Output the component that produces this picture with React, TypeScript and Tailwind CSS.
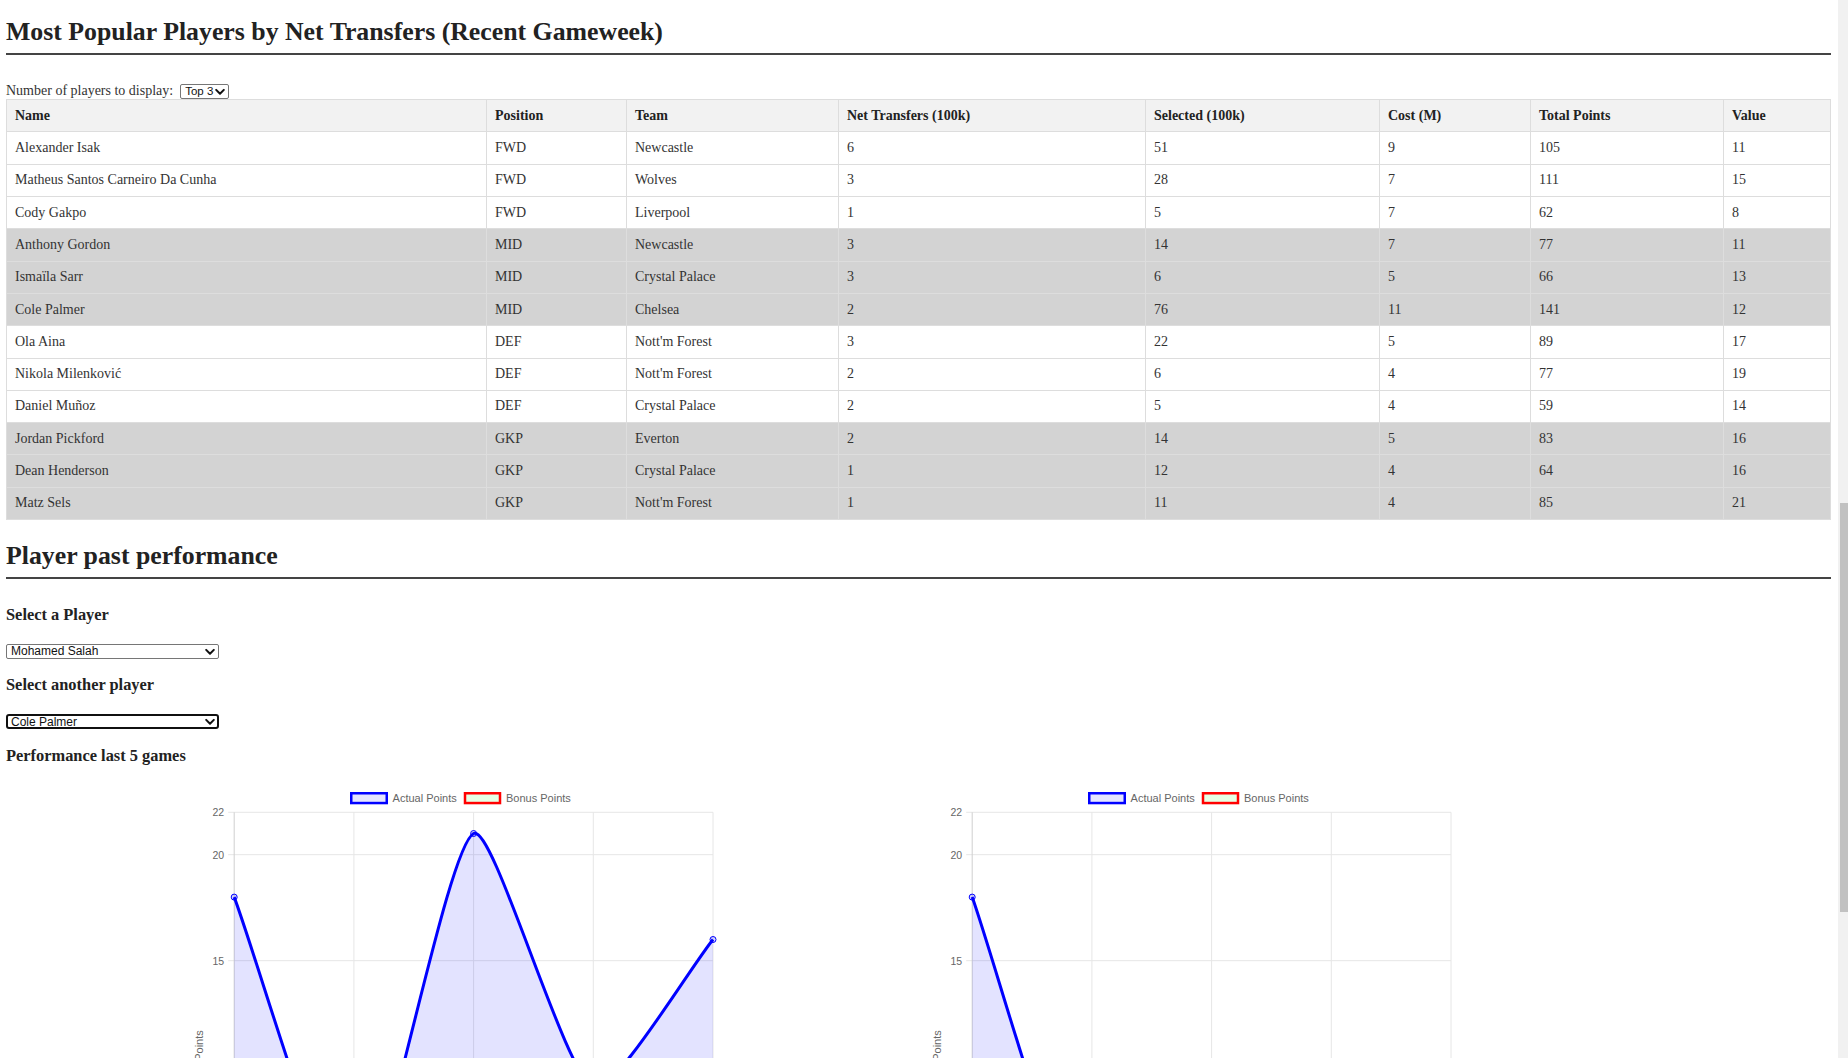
import React from "react";

type Player = [string, string, string, number, number, number, number, number];

const players: Player[] = [
  ["Alexander Isak", "FWD", "Newcastle", 6, 51, 9, 105, 11],
  ["Matheus Santos Carneiro Da Cunha", "FWD", "Wolves", 3, 28, 7, 111, 15],
  ["Cody Gakpo", "FWD", "Liverpool", 1, 5, 7, 62, 8],
  ["Anthony Gordon", "MID", "Newcastle", 3, 14, 7, 77, 11],
  ["Ismaïla Sarr", "MID", "Crystal Palace", 3, 6, 5, 66, 13],
  ["Cole Palmer", "MID", "Chelsea", 2, 76, 11, 141, 12],
  ["Ola Aina", "DEF", "Nott'm Forest", 3, 22, 5, 89, 17],
  ["Nikola Milenković", "DEF", "Nott'm Forest", 2, 6, 4, 77, 19],
  ["Daniel Muñoz", "DEF", "Crystal Palace", 2, 5, 4, 59, 14],
  ["Jordan Pickford", "GKP", "Everton", 2, 14, 5, 83, 16],
  ["Dean Henderson", "GKP", "Crystal Palace", 1, 12, 4, 64, 16],
  ["Matz Sels", "GKP", "Nott'm Forest", 1, 11, 4, 85, 21],
];

const headers = [
  { label: "Name", w: "w-[480px]" },
  { label: "Position", w: "w-[140px]" },
  { label: "Team", w: "w-[212px]" },
  { label: "Net Transfers (100k)", w: "w-[307px]" },
  { label: "Selected (100k)", w: "w-[234px]" },
  { label: "Cost (M)", w: "w-[151px]" },
  { label: "Total Points", w: "w-[193px]" },
  { label: "Value", w: "" },
];

function Chevron() {
  return (
    <svg
      width="10"
      height="7"
      viewBox="0 0 10 7"
      className="pointer-events-none absolute right-[4px] top-1/2 -translate-y-1/2"
    >
      <path d="M1.2 1.4 L5 5.2 L8.8 1.4" fill="none" stroke="#111" strokeWidth="2" strokeLinecap="round" strokeLinejoin="round" />
    </svg>
  );
}

function FakeSelect({ value, width, focused, small }: { value: string; width: string; focused?: boolean; small?: boolean }) {
  return (
    <div className={`relative flex h-[15px] ${width}`}>
      <select
        defaultValue={value}
        className={`h-[15px] w-full appearance-none bg-white font-['Liberation_Sans',Arial,sans-serif] leading-[13px] text-[#111] ${
          small ? "text-[11.5px]" : "text-[12px]"
        } ${focused ? "rounded-[3px] border-2 border-[#101010] pl-[3px]" : "rounded-[2px] border border-[#767676] pl-[4px]"}`}
      >
        <option>{value}</option>
      </select>
      <Chevron />
    </div>
  );
}

type Pt = { x: number; y: number };

function splinePath(pts: Pt[], tension: number, top: number, bottom: number) {
  const clamp = (v: number) => Math.min(bottom, Math.max(top, v));
  const cps = pts.map((p, i) => {
    const prev = pts[i - 1] ?? p;
    const next = pts[i + 1] ?? p;
    const d01 = Math.hypot(p.x - prev.x, p.y - prev.y);
    const d12 = Math.hypot(next.x - p.x, next.y - p.y);
    const sum = d01 + d12 || 1;
    const fa = tension * (d01 / sum);
    const fb = tension * (d12 / sum);
    return {
      prev: { x: p.x - fa * (next.x - prev.x), y: clamp(p.y - fa * (next.y - prev.y)) },
      next: { x: p.x + fb * (next.x - prev.x), y: clamp(p.y + fb * (next.y - prev.y)) },
    };
  });
  let d = `M${pts[0].x} ${pts[0].y}`;
  for (let i = 1; i < pts.length; i++) {
    const a = cps[i - 1].next;
    const b = cps[i].prev;
    d += ` C${a.x} ${a.y} ${b.x} ${b.y} ${pts[i].x} ${pts[i].y}`;
  }
  return d;
}

const X0 = 74.2;
const DX = 119.7;
const TOP = 42.3;
const UNIT = 21.2;
const yOf = (v: number) => TOP + (22 - v) * UNIT;
const BOTTOM = yOf(0);
const RIGHT = X0 + DX * 4;

function PerfChart({ actual, bonus }: { actual: number[]; bonus: number[] }) {
  const pts = actual.map((v, i) => ({ x: X0 + DX * i, y: yOf(v) }));
  const bpts = bonus.map((v, i) => ({ x: X0 + DX * i, y: yOf(v) }));
  const line = splinePath(pts, 0.2, TOP, BOTTOM);
  const bline = splinePath(bpts, 0.2, TOP, BOTTOM);
  const ticks = [22, 20, 15, 10, 5, 0];
  return (
    <svg width="738" height="560" className="shrink-0 font-['Liberation_Sans',Arial,sans-serif]">
      {/* legend */}
      <rect x="191.25" y="23.25" width="35.5" height="9.8" fill="rgba(0,0,255,0.1)" stroke="#0000ff" strokeWidth="2.5" />
      <text x="232.6" y="31.9" fontSize="11" fill="#666">Actual Points</text>
      <rect x="305" y="23.25" width="35" height="9.8" fill="rgba(0,255,0,0.1)" stroke="#ff0000" strokeWidth="2.5" />
      <text x="346" y="31.9" fontSize="11" fill="#666">Bonus Points</text>

      {/* grid */}
      {ticks.map((t) => (
        <g key={t}>
          <line x1={X0 - 6} x2={RIGHT} y1={yOf(t)} y2={yOf(t)} stroke="#e6e6e6" strokeWidth="1" />
          <text x={X0 - 10} y={yOf(t) + 3.8} fontSize="10.5" fill="#666" textAnchor="end">
            {t}
          </text>
        </g>
      ))}
      {[1, 2, 3, 4].map((i) => (
        <line key={i} x1={X0 + DX * i} x2={X0 + DX * i} y1={TOP} y2={BOTTOM + 6} stroke="#e6e6e6" strokeWidth="1" />
      ))}
      <line x1={X0} x2={X0} y1={TOP} y2={BOTTOM + 6} stroke="#cfcfcf" strokeWidth="1" />

      <text
        x="43"
        y={(TOP + BOTTOM) / 2}
        fontSize="11"
        fill="#666"
        textAnchor="middle"
        transform={`rotate(-90 43 ${(TOP + BOTTOM) / 2})`}
      >
        Points
      </text>

      {/* bonus dataset */}
      <path d={`${bline} L${RIGHT} ${BOTTOM} L${X0} ${BOTTOM} Z`} fill="rgba(0,255,0,0.1)" />
      <path d={bline} fill="none" stroke="#ff0000" strokeWidth="3" />

      {/* actual dataset */}
      <path d={`${line} L${RIGHT} ${BOTTOM} L${X0} ${BOTTOM} Z`} fill="rgba(0,0,255,0.11)" />
      <path d={line} fill="none" stroke="#0000ff" strokeWidth="3" strokeLinejoin="round" />
      {pts.map((p, i) => (
        <circle key={i} cx={p.x} cy={p.y} r="3" fill="rgba(0,0,255,0.15)" stroke="#0000ff" strokeWidth="1" />
      ))}
    </svg>
  );
}

export default function App() {
  return (
    <div className="flex h-[1058px] overflow-hidden bg-white">
      <main className="min-w-0 flex-1 pl-[6px] pr-[7px] font-['Liberation_Serif','Times_New_Roman',serif] text-[#222]">
        <h2 className="mt-[17px] border-b-2 border-[#444] pb-[6px] text-[25.8px] font-bold leading-[30px]">
          Most Popular Players by Net Transfers (Recent Gameweek)
        </h2>

        <div className="mt-[29px] flex h-[15px] items-center gap-[7px] text-[14px] leading-[14px] text-[#333]">
          <span className="-mt-[1px]">Number of players to display:</span>
          <FakeSelect value="Top 3" width="w-[49px]" small />
        </div>

        <table className="w-full table-fixed border-collapse border border-[#ddd] text-[14px] leading-[16px] text-[#333]">
          <thead>
            <tr className="bg-[#f2f2f2]">
              {headers.map((h) => (
                <th key={h.label} className={`${h.w} border border-[#ddd] px-[8px] py-[7.67px] text-left font-bold text-[#222]`}>
                  {h.label}
                </th>
              ))}
            </tr>
          </thead>
          <tbody>
            {players.map((p) => {
              const grey = p[1] === "MID" || p[1] === "GKP";
              return (
                <tr key={p[0]} className={grey ? "bg-[#d3d3d3]" : "bg-white"}>
                  {p.map((cell, i) => (
                    <td key={i} className="border border-[#ddd] px-[8px] py-[7.67px]">
                      {cell}
                    </td>
                  ))}
                </tr>
              );
            })}
          </tbody>
        </table>

        <h2 className="mt-[21px] border-b-2 border-[#444] pb-[6px] text-[25.8px] font-bold leading-[30px]">
          Player past performance
        </h2>

        <h3 className="mt-[26px] text-[16.4px] font-bold leading-[20px]">Select a Player</h3>
        <div className="mt-[19px] flex">
          <FakeSelect value="Mohamed Salah" width="w-[213px]" />
        </div>

        <h3 className="mt-[16px] text-[16.4px] font-bold leading-[20px]">Select another player</h3>
        <div className="mt-[19px] flex">
          <FakeSelect value="Cole Palmer" width="w-[213px]" focused />
        </div>

        <h3 className="mt-[17px] text-[16.4px] font-bold leading-[20px]">Performance last 5 games</h3>

        <div className="ml-[154px] mt-[4px] flex">
          <PerfChart actual={[18, 3, 21, 9, 16]} bonus={[3, 0, 3, 1, 2]} />
          <PerfChart actual={[18, 2, 3, 4, 3]} bonus={[3, 0, 0, 0, 0]} />
        </div>
      </main>

      <div className="flex w-[10px] shrink-0 flex-col bg-[#f1f1f1]">
        <div className="ml-[2px] mt-[503px] h-[409px] w-[8px] bg-[#c1c1c1]" />
      </div>
    </div>
  );
}
